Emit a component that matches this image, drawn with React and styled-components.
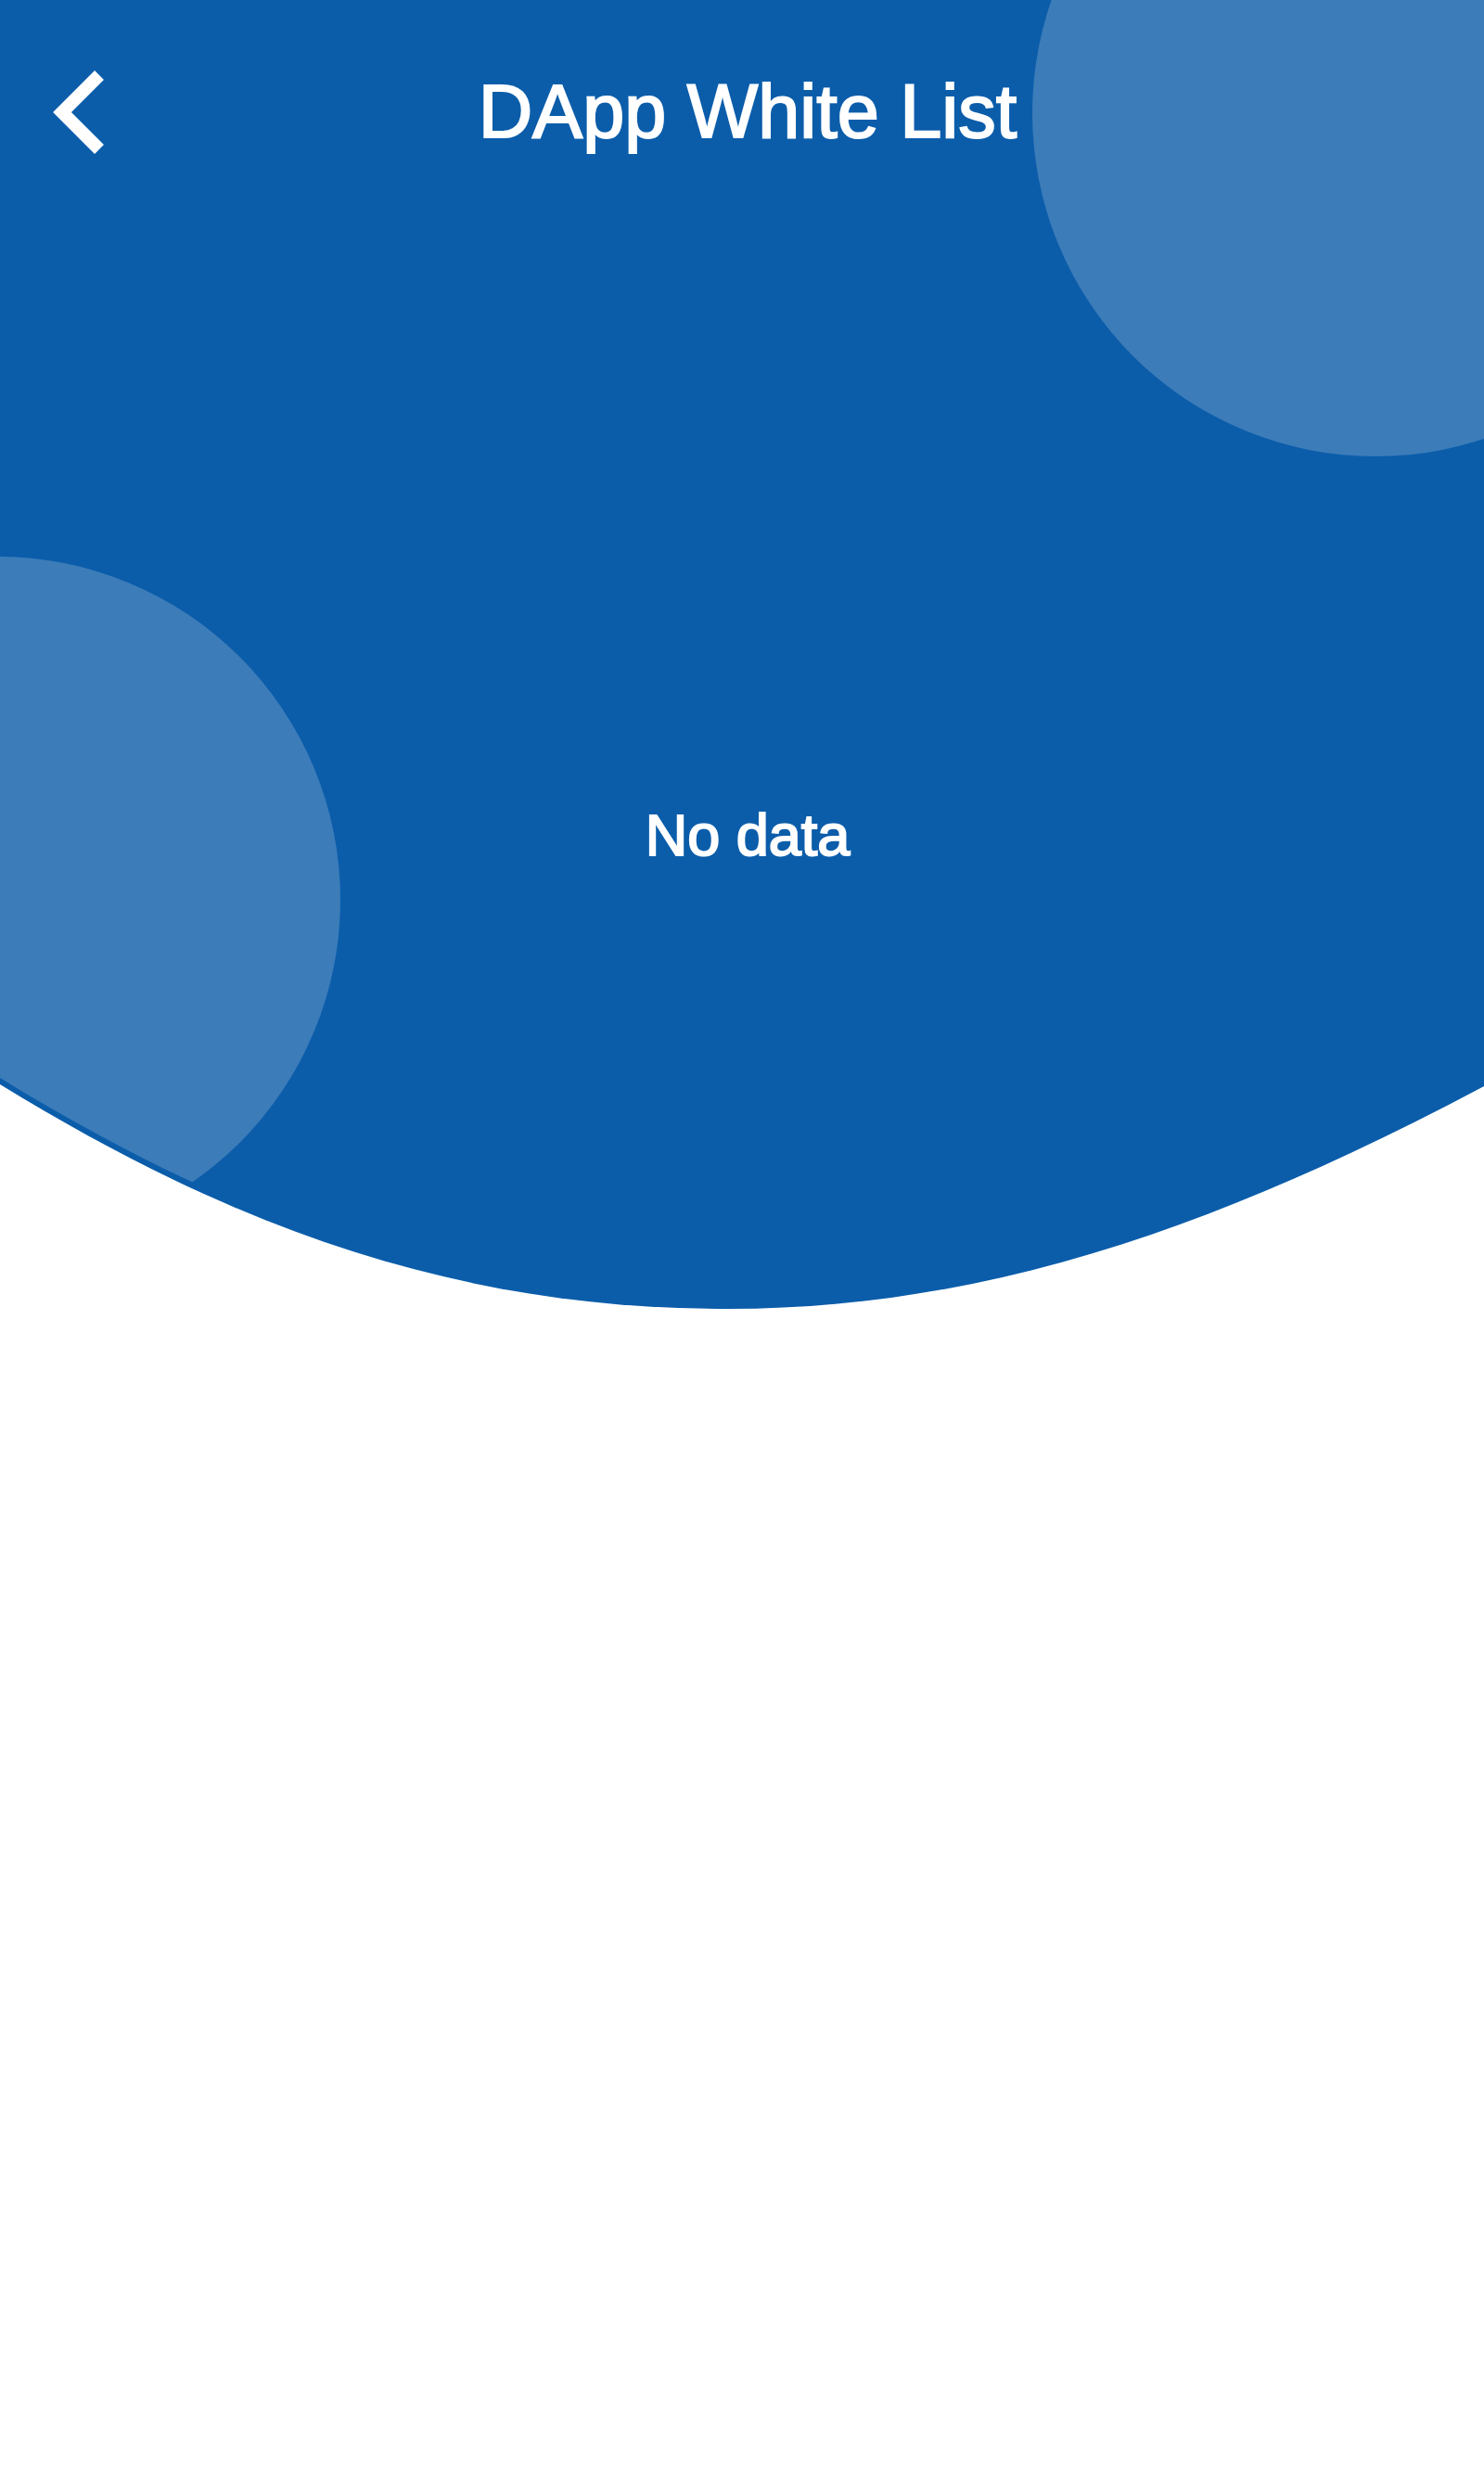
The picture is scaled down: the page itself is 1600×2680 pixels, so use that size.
import React from "react";
import styled, { createGlobalStyle } from "styled-components";

const GlobalStyle = createGlobalStyle`
  *, *::before, *::after {
    box-sizing: border-box;
  }

  body {
    margin: 0;
    background: #ffffff;
    font-family: "Liberation Sans", Arial, sans-serif;
  }
`;

const Screen = styled.div`
  min-height: 100vh;
  background: #ffffff;
`;

const Hero = styled.div`
  display: grid;
  overflow: hidden;

  > * {
    grid-area: 1 / 1;
  }
`;

const Backdrop = styled.svg`
  display: block;
  width: 100%;
  height: auto;
`;

const Content = styled.div`
  display: flex;
  flex-direction: column;
  padding-left: 12px;
  color: #ffffff;
  -webkit-text-stroke: 2px #ffffff;
  z-index: 1;
`;

const Header = styled.header`
  display: grid;
  grid-template-columns: 140px 1fr 140px;
  align-items: center;
  height: 240px;
`;

const BackButton = styled.button`
  display: flex;
  align-items: center;
  justify-content: center;
  width: 140px;
  height: 140px;
  padding: 0;
  border: 0;
  background: none;
  color: inherit;
  cursor: pointer;
`;

const BackIcon = styled.svg`
  display: block;
  width: 64px;
  height: 96px;
`;

const Title = styled.h1`
  margin: 0;
  font-size: 81px;
  font-weight: 400;
  line-height: 96px;
  text-align: center;
`;

const Body = styled.main`
  display: flex;
  flex: 1;
  justify-content: center;
  padding-top: 620px;
`;

const EmptyText = styled.p`
  margin: 0;
  font-size: 63px;
  line-height: 80px;
`;

const CURVE =
  "M0 0H1600V1171C1330 1314 1073 1411 785 1411C509 1411 270 1335 0 1169Z";

export default function App() {
  return (
    <>
      <GlobalStyle />
      <Screen>
        <Hero>
          <Backdrop viewBox="0 0 1600 1412" aria-hidden="true">
            <defs>
              <clipPath id="inner-curve">
                <path d={CURVE} transform="translate(0 -7)" />
              </clipPath>
            </defs>
            <path d={CURVE} fill="#0b5daa" />
            <circle cx="1483" cy="122" r="370" fill="#3c7cb9" />
            <circle
              cx="-3"
              cy="970"
              r="370"
              fill="#3c7cb9"
              clipPath="url(#inner-curve)"
            />
          </Backdrop>
          <Content>
            <Header>
              <BackButton type="button" aria-label="Back">
                <BackIcon viewBox="0 0 64 96" fill="none" aria-hidden="true">
                  <path
                    d="M57 9L17 49L57 89"
                    stroke="currentColor"
                    strokeWidth="14"
                  />
                </BackIcon>
              </BackButton>
              <Title>DApp White List</Title>
            </Header>
            <Body>
              <EmptyText>No data</EmptyText>
            </Body>
          </Content>
        </Hero>
      </Screen>
    </>
  );
}
